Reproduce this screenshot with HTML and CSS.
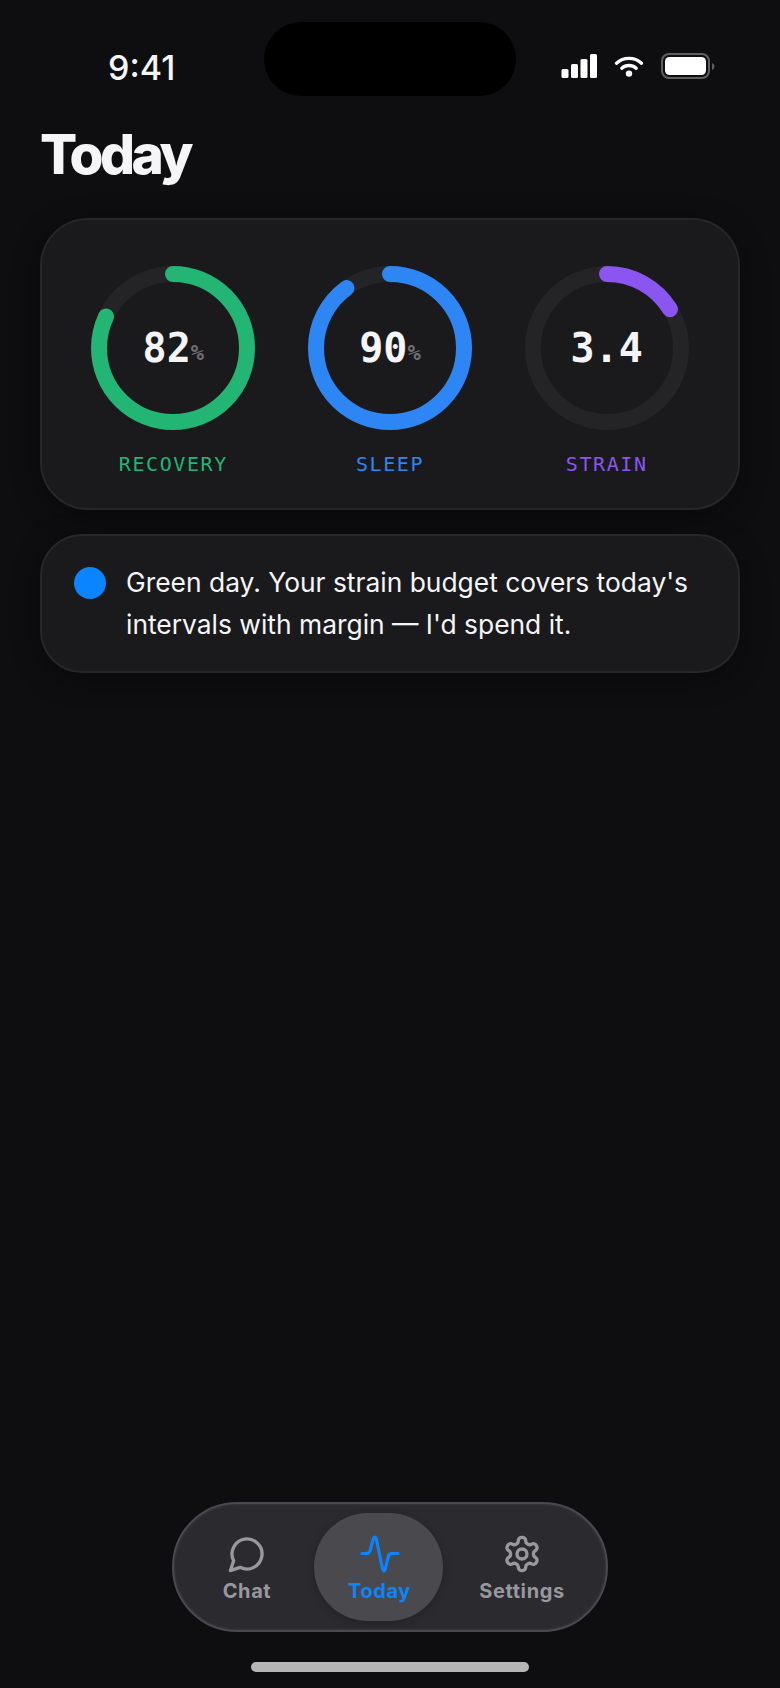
FILE: index.html
```html
<!DOCTYPE html>
<html lang="en">
<head>
  <meta charset="UTF-8" />
  <meta name="viewport" content="width=device-width, initial-scale=1.0"/>
  <title>Today</title>
  <link rel="stylesheet" href="styles.css">
</head>
<body>
  <div class="screen">

    <!-- Status bar -->
    <div class="status-bar">
      <span class="time">9:41</span>
      <div class="island"></div>
      <div class="status-icons">
        <svg class="signal" width="36" height="24" viewBox="0 0 36 24">
          <rect x="0.5" y="15" width="7" height="9" rx="1.5"/>
          <rect x="10" y="10" width="7" height="14" rx="1.5"/>
          <rect x="19.5" y="5" width="7" height="19" rx="1.5"/>
          <rect x="29" y="0" width="7" height="24" rx="1.5"/>
        </svg>
        <svg class="wifi" width="30" height="22" viewBox="0 0 30 22">
          <path d="M2.500 8.200C9.500 1.700 20.500 1.700 27.500 8.200"/>
          <path d="M7.800 13.200C11.800 9.600 18.200 9.600 22.200 13.200"/>
          <circle cx="15" cy="18.600" r="3.200"/>
        </svg>
        <svg class="battery" width="54" height="26" viewBox="0 0 54 26">
          <rect x="1" y="1" width="47" height="24" rx="7" fill="none" stroke="#5f5f62" stroke-width="2"/>
          <rect x="4" y="4" width="41" height="18" rx="4.500" fill="#fff"/>
          <path d="M51 10v7c1.500-.6 2.500-2 2.500-3.500S52.500 10.600 51 10z" fill="#5f5f62"/>
        </svg>
      </div>
    </div>

    <h1 class="page-title">Today</h1>

    <!-- Rings -->
    <div class="card rings">
      <div class="ring-item">
        <div class="ring">
          <svg width="164" height="164" viewBox="0 0 164 164">
            <circle class="ring-track" cx="82" cy="82" r="74"/>
            <circle class="ring-fill green" cx="82" cy="82" r="74" pathLength="100" stroke-dasharray="82 100"/>
          </svg>
          <div class="ring-value">82<span class="unit">%</span></div>
        </div>
        <div class="ring-label green-text">RECOVERY</div>
      </div>
      <div class="ring-item">
        <div class="ring">
          <svg width="164" height="164" viewBox="0 0 164 164">
            <circle class="ring-track" cx="82" cy="82" r="74"/>
            <circle class="ring-fill blue" cx="82" cy="82" r="74" pathLength="100" stroke-dasharray="90 100"/>
          </svg>
          <div class="ring-value">90<span class="unit">%</span></div>
        </div>
        <div class="ring-label blue-text">SLEEP</div>
      </div>
      <div class="ring-item">
        <div class="ring">
          <svg width="164" height="164" viewBox="0 0 164 164">
            <circle class="ring-track" cx="82" cy="82" r="74"/>
            <circle class="ring-fill purple" cx="82" cy="82" r="74" pathLength="100" stroke-dasharray="16.2 100"/>
          </svg>
          <div class="ring-value">3.4</div>
        </div>
        <div class="ring-label purple-text">STRAIN</div>
      </div>
    </div>

    <!-- Coach note -->
    <div class="card note">
      <span class="note-dot"></span>
      <p>Green day. Your strain budget covers today's intervals with margin — I'd spend it.</p>
    </div>

    <!-- Tab bar -->
    <nav class="tab-bar">
      <a class="tab tab-chat">
        <svg width="40" height="40" viewBox="0 0 24 24">
          <path d="M7.900 20A9 9 0 1 0 4 16.100L2 22Z"/>
        </svg>
        <span>Chat</span>
      </a>
      <a class="tab tab-today active">
        <svg width="40" height="40" viewBox="0 0 40 40">
          <path class="pulse" d="M2 19.500H6.500C8.500 19.500 9.500 18.500 10.200 16.200L13.300 5C14 2.500 15.600 2.500 16.300 5L22.600 35C23.300 37.500 24.500 37.500 25.300 35L28.300 22.500C28.900 20.300 30 19.500 32 19.500H38"/>
        </svg>
        <span>Today</span>
      </a>
      <a class="tab tab-settings">
        <svg width="40" height="40" viewBox="0 0 24 24">
          <path d="M12.220 2h-.44a2 2 0 0 0-2 2v.18a2 2 0 0 1-1 1.730l-.43.25a2 2 0 0 1-2 0l-.15-.08a2 2 0 0 0-2.730.73l-.22.38a2 2 0 0 0 .73 2.730l.15.1a2 2 0 0 1 1 1.720v.51a2 2 0 0 1-1 1.740l-.15.09a2 2 0 0 0-.73 2.730l.22.38a2 2 0 0 0 2.730.73l.15-.08a2 2 0 0 1 2 0l.43.25a2 2 0 0 1 1 1.730V20a2 2 0 0 0 2 2h.44a2 2 0 0 0 2-2v-.18a2 2 0 0 1 1-1.730l.43-.25a2 2 0 0 1 2 0l.15.08a2 2 0 0 0 2.730-.73l.22-.39a2 2 0 0 0-.73-2.730l-.15-.08a2 2 0 0 1-1-1.740v-.5a2 2 0 0 1 1-1.740l.15-.09a2 2 0 0 0 .73-2.730l-.22-.38a2 2 0 0 0-2.730-.73l-.15.08a2 2 0 0 1-2 0l-.43-.25a2 2 0 0 1-1-1.730V4a2 2 0 0 0-2-2z"/>
          <circle cx="12" cy="12" r="3"/>
        </svg>
        <span>Settings</span>
      </a>
    </nav>

    <div class="home-indicator"></div>
  </div>
</body>
</html>
```

FILE: styles.css
```css
* {
  box-sizing: border-box;
}

body {
  font-family: Inter, 'Noto Sans', sans-serif;
  background: #0e0e11;
  color: #f5f5f7;
  margin: 0;
  padding: 0;
}

.screen {
  position: relative;
  display: flex;
  flex-direction: column;
  height: 1688px;
  padding: 0 40px;
}

/* Status bar */
.status-bar {
  display: flex;
  align-items: center;
  justify-content: space-between;
  height: 134px;
  padding: 0 25px 0 68px;
}

.time {
  font-size: 34px;
  font-weight: 500;
  color: #f5f5f7;
  margin-top: 1px;
}

.island {
  position: absolute;
  top: 22px;
  left: 264px;
  width: 252px;
  height: 74px;
  border-radius: 37px;
  background: #000;
}

.status-icons {
  display: flex;
  align-items: center;
  gap: 17px;
  margin-top: -2px;
}

.signal rect {
  fill: #fff;
}

.wifi path {
  fill: none;
  stroke: #fff;
  stroke-width: 3.4;
  stroke-linecap: round;
}

.wifi circle {
  fill: #fff;
}

.page-title {
  margin: -4px 0 0;
  font-size: 55px;
  line-height: 48px;
  font-weight: 800;
  letter-spacing: -3.5px;
  color: #f5f5f7;
}

/* Cards */
.card {
  background: #1a1a1d;
  border: 2px solid #27272a;
  box-shadow: 0 6px 28px rgba(0, 0, 0, 0.35);
}

.rings {
  display: grid;
  grid-template-columns: repeat(3, 1fr);
  height: 292px;
  margin-top: 40px;
  padding: 46px 23px 0;
  border-radius: 48px;
}

.ring-item {
  display: flex;
  flex-direction: column;
  align-items: center;
}

.ring {
  position: relative;
  width: 164px;
  height: 164px;
}

.ring svg {
  display: block;
  transform: rotate(-90deg);
}

.ring-track,
.ring-fill {
  fill: none;
  stroke-width: 16;
}

.ring-track {
  stroke: #242427;
}

.ring-fill {
  stroke-linecap: round;
}

.ring-fill.green {
  stroke: #22b573;
}

.ring-fill.blue {
  stroke: #2e86f5;
}

.ring-fill.purple {
  stroke: #8b55f0;
}

.ring-value {
  position: absolute;
  inset: 0;
  display: flex;
  align-items: center;
  justify-content: center;
  font-family: 'DejaVu Sans Mono', monospace;
  font-size: 40px;
  font-weight: 700;
  color: #f5f5f7;
}

.unit {
  font-size: 22px;
  font-weight: 700;
  color: #6e6e73;
  margin-top: 8px;
}

.ring-label {
  margin-top: 22px;
  font-family: 'DejaVu Sans Mono', monospace;
  font-size: 20px;
  line-height: 24px;
  letter-spacing: 1.6px;
}

.green-text {
  color: #22b573;
}

.blue-text {
  color: #2e86f5;
}

.purple-text {
  color: #8b55f0;
}

.note {
  display: flex;
  gap: 20px;
  height: 139px;
  margin-top: 24px;
  padding: 25px 32px;
  border-radius: 42px;
}

.note-dot {
  flex: none;
  width: 32px;
  height: 32px;
  margin-top: 6px;
  border-radius: 50%;
  background: #0a84ff;
}

.note p {
  margin: 0;
  font-size: 26.4px;
  line-height: 42px;
  color: #f5f5f7;
}

/* Tab bar */
.tab-bar {
  position: absolute;
  left: 172px;
  top: 1502px;
  display: flex;
  gap: 4px;
  width: 436px;
  height: 130px;
  padding: 9px 9px 9px 10px;
  border-radius: 65px;
  background: #2a2a2f;
  border: 2px solid #4a4a4e;
  box-shadow: inset 0 0 3px rgba(255, 255, 255, 0.12);
}

.tab {
  display: flex;
  flex-direction: column;
  align-items: center;
  padding-top: 21px;
  height: 108px;
  border-radius: 54px;
  font-size: 20px;
  line-height: 24px;
  font-weight: 700;
  letter-spacing: 0.6px;
  color: #98989e;
}

.tab svg {
  display: block;
  margin-bottom: 5px;
  fill: none;
  stroke: currentColor;
  stroke-width: 2;
  stroke-linecap: round;
  stroke-linejoin: round;
}

.tab-chat {
  width: 126px;
}

.tab-today {
  width: 129px;
  padding-left: 2px;
}

.tab-settings {
  width: 150px;
}

.tab.active {
  background: #4a4a4e;
  color: #0a84ff;
  box-shadow: 0 2px 8px rgba(0, 0, 0, 0.2);
}

.tab svg .pulse {
  stroke-width: 3.2;
}

.home-indicator {
  position: absolute;
  left: 251px;
  top: 1662px;
  width: 278px;
  height: 10px;
  border-radius: 5px;
  background: #b5b5b5;
}
```
